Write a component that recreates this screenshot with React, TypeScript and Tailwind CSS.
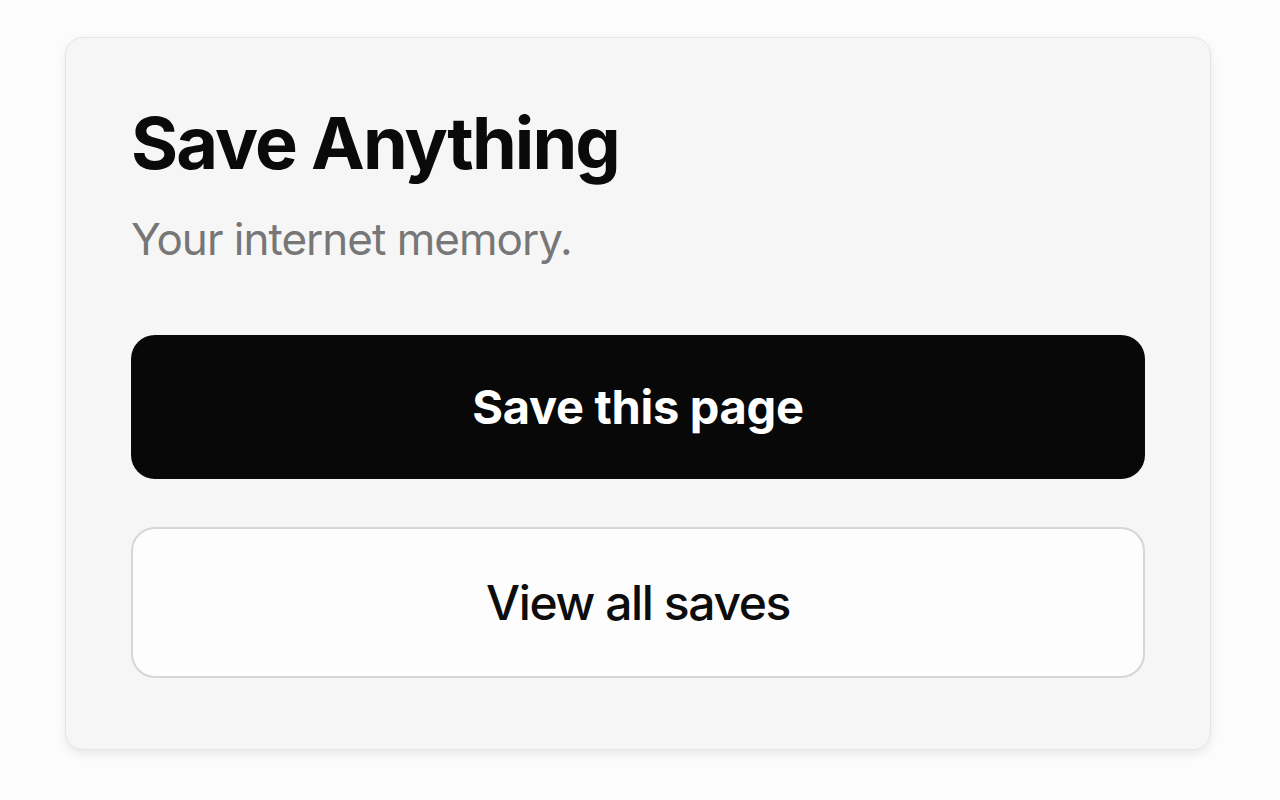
import React from "react";

export default function App() {
  return (
    <div className="min-h-[800px] w-full bg-[#fcfcfc] pt-[37px] pl-[65px]" style={{ fontFamily: "Inter, 'Liberation Sans', sans-serif" }}>
      <div className="w-[1146px] h-[713px] rounded-[18px] border border-[#e6e6e6] bg-[#f6f6f6] shadow-[0_4px_10px_rgba(0,0,0,0.08)] px-[65px] pt-[60px]">
        <h1 className="text-[72px] leading-[90px] font-bold text-[#0a0a0a] tracking-[-1.9px]">Save Anything</h1>
        <p className="mt-[23px] text-[44px] leading-[56px] text-[#777777] tracking-[-1px]">Your internet memory.</p>
        <button className="mt-[68px] w-full h-[144px] rounded-[24px] bg-[#080808] text-white text-[47px] font-bold tracking-[-0.3px]">
          Save this page
        </button>
        <button className="mt-[48px] w-full h-[151px] rounded-[24px] border-2 border-[#d6d6d6] bg-[#fdfdfd] text-[#0d0d0d] text-[48px] font-medium tracking-[-1.4px]">
          View all saves
        </button>
      </div>
    </div>
  );
}
